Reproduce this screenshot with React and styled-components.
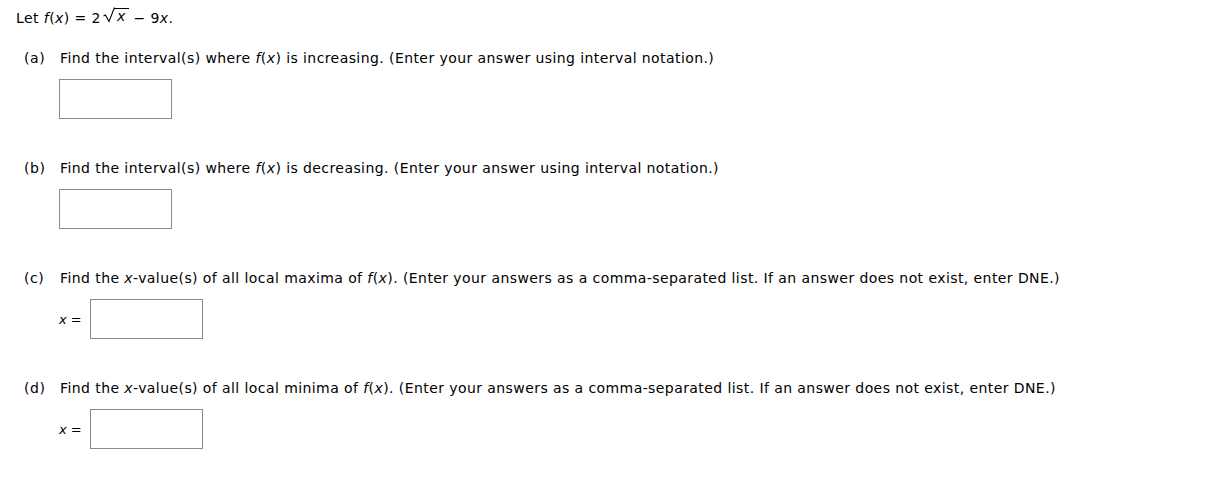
import React from 'react'
import styled, { createGlobalStyle } from 'styled-components'

const Global = createGlobalStyle`
  body {
    margin: 0;
    background: #fff;
    font-family: "DejaVu Sans", Verdana, sans-serif;
    font-size: 14px;
    letter-spacing: 0.42px;
    color: #000;
  }
`

const Page = styled.div`
  padding: 6px 16px;
  display: flex;
  flex-direction: column;
`

const Intro = styled.div`
  line-height: 18px;
  white-space: nowrap;
`

const Var = styled.i`
  font-style: italic;
`

const Radical = styled.span`
  display: inline-flex;
  align-items: flex-end;
  margin-left: 2px;
  svg { display: block; margin-right: -1px; }
`

const Under = styled.span`
  border-top: 1px solid #000;
  padding: 0 3px 0 3px;
  line-height: 14px;
`

const Part = styled.div`
  margin-top: ${p => (p.$first ? 22 : 40)}px;
  margin-left: 8px;
  display: flex;
  flex-direction: column;
`

const Question = styled.div`
  display: flex;
  line-height: 18px;
  white-space: nowrap;
`

const Label = styled.span`
  width: 36px;
  flex: none;
  letter-spacing: 0.6px;
`

const AnswerRow = styled.div`
  margin-top: 12px;
  margin-left: 35px;
  display: flex;
  align-items: center;
  gap: 9px;
`

const Eq = styled.span`
  width: 22px;
  white-space: nowrap;
  font-size: 13px;
  letter-spacing: 0;
`

const Box = styled.input`
  width: 113px;
  height: 40px;
  box-sizing: border-box;
  border: 1px solid #8a8a8a;
  background: #fff;
  padding: 0 4px;
  margin: 0;
  font: inherit;
  outline: none;
`

const Fx = () => (
  <>
    <Var>f</Var>(<Var>x</Var>)
  </>
)

const parts = [
  {
    label: '(a)',
    text: (
      <>
        Find the interval(s) where <Fx /> is increasing. (Enter your answer using interval notation.)
      </>
    ),
  },
  {
    label: '(b)',
    text: (
      <>
        Find the interval(s) where <Fx /> is decreasing. (Enter your answer using interval notation.)
      </>
    ),
  },
  {
    label: '(c)',
    eq: true,
    text: (
      <>
        Find the <Var>x</Var>-value(s) of all local maxima of <Fx />. (Enter your answers as a comma-separated
        list. If an answer does not exist, enter DNE.)
      </>
    ),
  },
  {
    label: '(d)',
    eq: true,
    text: (
      <>
        Find the <Var>x</Var>-value(s) of all local minima of <Fx />. (Enter your answers as a comma-separated
        list. If an answer does not exist, enter DNE.)
      </>
    ),
  },
]

export default function App() {
  return (
    <>
      <Global />
      <Page>
        <Intro>
          Let <Fx /> = 2
          <Radical>
            <svg width="12" height="17" viewBox="0 0 12 17">
              <path d="M0.5 10 L2.5 9 L6 15.5 L11.5 1.5" fill="none" stroke="#000" strokeWidth="1.1" />
            </svg>
            <Under>
              <Var>x</Var>
            </Under>
          </Radical>{' '}
          − 9<Var>x</Var>.
        </Intro>
        {parts.map((p, i) => (
          <Part key={p.label} $first={i === 0}>
            <Question>
              <Label>{p.label}</Label>
              <span>{p.text}</span>
            </Question>
            <AnswerRow>
              {p.eq && (
                <Eq>
                  <Var>x</Var> =
                </Eq>
              )}
              <Box type="text" />
            </AnswerRow>
          </Part>
        ))}
      </Page>
    </>
  )
}
